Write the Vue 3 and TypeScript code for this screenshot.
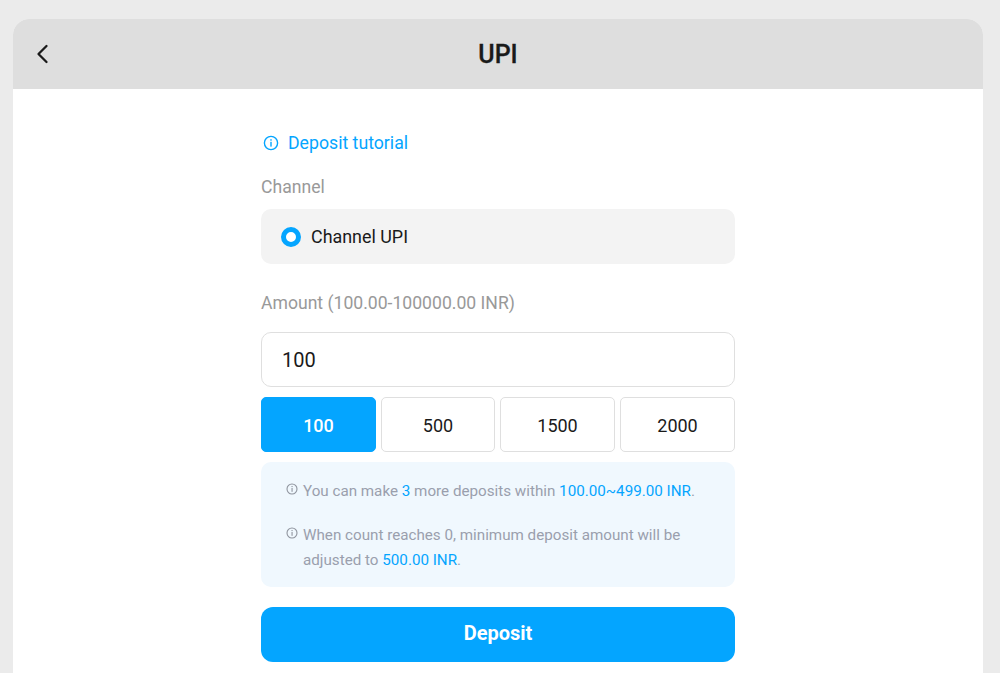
<template>
  <div class="page">
    <div class="card">
      <header class="top-bar">
        <button class="back-btn" aria-label="Back">
          <svg width="14" height="22" viewBox="0 0 14 22" fill="none">
            <path d="M11.5 3 L3.5 11 L11.5 19" stroke="#1a1a1a" stroke-width="2.3" stroke-linecap="round" stroke-linejoin="round" />
          </svg>
        </button>
        <h1>UPI</h1>
      </header>

      <main class="content">
        <a class="tutorial">
          <svg class="tutorial-icon" width="16" height="16" viewBox="0 0 16 16" fill="none">
            <circle cx="8" cy="8" r="6.6" stroke="#04a5ff" stroke-width="1.4" />
            <rect x="7.3" y="4.2" width="1.4" height="1.5" fill="#04a5ff" />
            <rect x="7.3" y="6.8" width="1.4" height="4.8" fill="#04a5ff" />
          </svg>
          Deposit tutorial
        </a>

        <div class="label channel-label">Channel</div>
        <div class="channel-box">
          <span class="radio"></span>
          <span>Channel UPI</span>
        </div>

        <div class="label amount-label">Amount (100.00-100000.00 INR)</div>
        <div class="amount-input">100</div>

        <div class="quick-grid">
          <button
            v-for="amount in quickAmounts"
            :key="amount"
            class="quick-btn"
            :class="{ active: amount === selected }"
          >
            {{ amount }}
          </button>
        </div>

        <div class="notice">
          <p class="notice-row">
            <svg class="notice-icon" width="12" height="12" viewBox="0 0 12 12" fill="none">
              <circle cx="6" cy="6" r="5" stroke="#8f949e" stroke-width="1.1" />
              <rect x="5.5" y="3" width="1.1" height="1.1" fill="#8f949e" />
              <rect x="5.5" y="5" width="1.1" height="3.8" fill="#8f949e" />
            </svg>
            <span>You can make <em>3</em> more deposits within <em>100.00~499.00 INR</em>.</span>
          </p>
          <p class="notice-row">
            <svg class="notice-icon" width="12" height="12" viewBox="0 0 12 12" fill="none">
              <circle cx="6" cy="6" r="5" stroke="#8f949e" stroke-width="1.1" />
              <rect x="5.5" y="3" width="1.1" height="1.1" fill="#8f949e" />
              <rect x="5.5" y="5" width="1.1" height="3.8" fill="#8f949e" />
            </svg>
            <span>When count reaches 0, minimum deposit amount will be adjusted to <em>500.00 INR</em>.</span>
          </p>
        </div>

        <button class="deposit-btn">Deposit</button>
      </main>
    </div>
  </div>
</template>

<script setup lang="ts">
const quickAmounts: number[] = [100, 500, 1500, 2000]
const selected = 100
</script>

<style>
html,
body {
  margin: 0;
  background: #ebebeb;
}
</style>

<style scoped>
.page {
  height: 673px;
  overflow: hidden;
  padding: 19px 17px 0 13px;
  box-sizing: border-box;
  background: #ebebeb;
  font-family: Roboto, "Liberation Sans", sans-serif;
}

.card {
  background: #fff;
  border-radius: 16px 16px 0 0;
  overflow: hidden;
  height: 100%;
}

.top-bar {
  height: 70px;
  background: #dedede;
  display: flex;
  align-items: center;
  justify-content: center;
  position: relative;
}

.top-bar h1 {
  margin: 0;
  font-size: 25px;
  font-weight: 500;
  color: #1a1a1a;
  -webkit-text-stroke: 0.3px #1a1a1a;
}

.back-btn {
  position: absolute;
  left: 22px;
  top: 24px;
  padding: 0;
  border: none;
  background: none;
  line-height: 0;
}

.content {
  width: 474px;
  margin-left: 248px;
  padding-top: 42px;
  display: flex;
  flex-direction: column;
}

.tutorial {
  display: flex;
  align-items: center;
  height: 24px;
  font-size: 17.7px;
  color: #04a5ff;
}

.tutorial-icon {
  margin: 0 9px 0 2px;
}

.label {
  font-size: 17.6px;
  line-height: 24px;
  color: #999;
}

.channel-label {
  margin-top: 20px;
}

.channel-box {
  margin-top: 10px;
  height: 55px;
  background: #f3f3f3;
  border-radius: 10px;
  display: flex;
  align-items: center;
  padding-left: 20px;
  font-size: 17.9px;
  color: #1a1a1a;
}

.radio {
  width: 10px;
  height: 10px;
  border: 5px solid #04a5ff;
  border-radius: 50%;
  background: #fff;
  margin-right: 10px;
}

.amount-label {
  margin-top: 27px;
}

.amount-input {
  margin-top: 17px;
  height: 55px;
  box-sizing: border-box;
  border: 1px solid #dfdfdf;
  border-radius: 10px;
  display: flex;
  align-items: center;
  padding-left: 20px;
  font-size: 20px;
  color: #1a1a1a;
}

.quick-grid {
  margin-top: 10px;
  display: grid;
  grid-template-columns: 115px 114px 115px 115px;
  gap: 5px;
}

.quick-btn {
  height: 55px;
  box-sizing: border-box;
  border: 1px solid #dfdfdf;
  border-radius: 5px;
  background: #fff;
  font-family: inherit;
  font-size: 18px;
  color: #1a1a1a;
  padding: 1px 0 0;
}

.quick-btn.active {
  background: #04a5ff;
  border-color: #04a5ff;
  color: #fff;
  font-weight: 500;
}

.notice {
  margin-top: 10px;
  height: 125px;
  box-sizing: border-box;
  background: #f0f8fe;
  border-radius: 10px;
  padding: 17px 25px 0;
  font-size: 15.2px;
  line-height: 25px;
  color: #9a9fad;
}

.notice-row {
  margin: 0 0 19px;
  display: flex;
  align-items: flex-start;
}

.notice-icon {
  flex: none;
  margin: 4px 5px 0 0;
}

.notice em {
  font-style: normal;
  color: #04a5ff;
}

.deposit-btn {
  margin-top: 20px;
  height: 55px;
  border: none;
  border-radius: 12px;
  background: #04a5ff;
  color: #fff;
  font-family: inherit;
  font-size: 20px;
  font-weight: 700;
  padding: 0 0 3px;
}
</style>
